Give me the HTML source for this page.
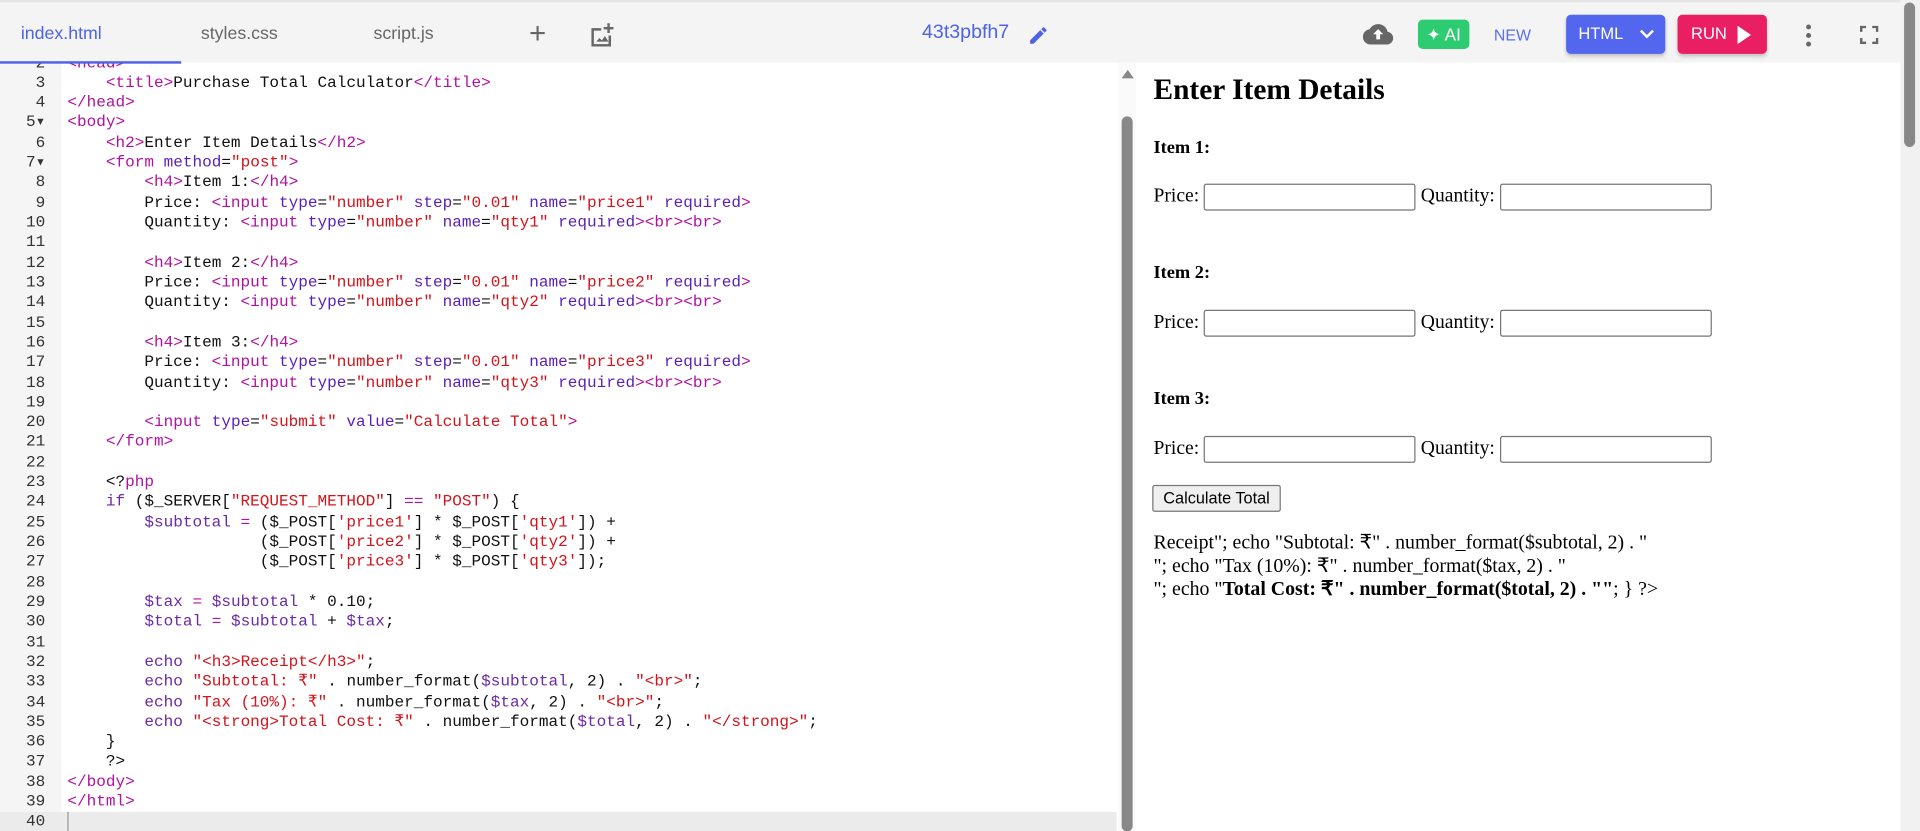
<!DOCTYPE html>
<html><head><meta charset="utf-8">
<style>
html,body{margin:0;padding:0;width:1920px;height:831px;overflow:hidden;background:#fff}
#w{position:absolute;left:0;top:0;width:1568px;height:679px;transform:scale(1.22449);transform-origin:0 0;font-family:"Liberation Sans",sans-serif}
#hdr{position:absolute;left:0;top:0;width:1552px;height:51px;background:#f4f4f4;border-top:2px solid #e6e6e6;box-sizing:border-box;z-index:5}
.tab{position:absolute;top:18px;font-size:14.5px;color:#666}
#ul{position:absolute;left:0;top:48px;width:148px;height:2px;background:#4d63e6}
#ed{position:absolute;left:0;top:51px;width:912px;height:628px;overflow:hidden;background:#fff}
#gut{position:absolute;left:0;top:0;width:50px;height:628px;background:#f5f5f5}
#code{position:absolute;left:0;top:-7.5px;width:912px;font-family:"Liberation Mono",monospace;font-size:13.1px;}
.l{height:16.32px;line-height:16.32px;position:relative;white-space:pre;color:#111}
.l .n{position:absolute;left:0;width:37px;text-align:right;color:#333}
.l .c{position:absolute;left:55px}
.t{color:#b0139f}.a{color:#5a1fb8}.s{color:#d4131b}.v{color:#6b2aa6}.k{color:#6b2aa6}.o{color:#b0139f}
#sb{position:absolute;left:913px;top:51px;width:15px;height:628px;background:#fafafa}
#pv{position:absolute;left:933px;top:51px;width:619px;height:628px;background:#fff;font-family:"Liberation Serif",serif;color:#000;font-size:16px}
#pv .x{position:absolute;white-space:nowrap}
.in{display:inline-block;width:171px;height:20px;border:1px solid #767676;border-radius:2px;vertical-align:middle}
#rsb{position:absolute;left:1552px;top:0;width:16px;height:679px;background:#f1f1f1}
</style></head><body><div id="w">
<div id="hdr">
<div class="tab" style="left:17px;color:#4d63e6">index.html</div>
<div class="tab" style="left:164px">styles.css</div>
<div class="tab" style="left:305px">script.js</div>
<div style="position:absolute;left:432px;top:12px;font-size:24px;color:#666;font-weight:300">+</div>
<svg style="position:absolute;left:480px;top:14px" width="24" height="24" viewBox="0 0 24 24"><path d="M18 3v3h3v2h-3v3h-2V8h-3V6h3V3z M4 7h7v2H5v11h12v-7h2v9H3V7z M7 18l2.5-3 2 2 2.5-3.5 3 4.5z" fill="#666"/></svg>
<div class="tab" style="left:753px;color:#4d63e6;font-size:16px;top:16px">43t3pbfh7</div>
<svg style="position:absolute;left:839px;top:18px" width="18" height="18" viewBox="0 0 24 24"><path d="M3 17.25V21h3.75L17.8 9.94l-3.75-3.75L3 17.25zM20.7 7.04a1 1 0 000-1.41l-2.34-2.34a1 1 0 00-1.41 0l-1.83 1.83 3.75 3.75 1.83-1.83z" fill="#4d63e6"/></svg>
<svg style="position:absolute;left:1113px;top:16px" width="25" height="20" viewBox="0 0 24 18"><path d="M19.35 7.04A7.49 7.49 0 0012 1C9.11 1 6.6 2.640 5.35 5.04A6 6 0 006 17h13a5 5 0 00.35-9.96z" fill="#666"/><path d="M12 5l4 4h-2.5v4h-3V9H8z" fill="#fff"/></svg>
<div style="position:absolute;left:1158px;top:14px;width:42px;height:24px;background:#2ecc71;border-radius:4px;color:#fff;font-size:14px;line-height:24px;text-align:center">✦ AI</div>
<div style="position:absolute;left:1220px;top:19px;color:#5a6fe6;font-size:13px">NEW</div>
<div style="position:absolute;left:1279px;top:10px;width:81px;height:32px;background:#5266ee;border-radius:4px;color:#fff;font-size:13.5px;line-height:32px;box-shadow:0 2px 3px rgba(0,0,0,.2)"><span style="margin-left:10px">HTML</span><svg style="position:absolute;left:60px;top:11px" width="12" height="10" viewBox="0 0 12 10"><path d="M1 2l5 5 5-5" stroke="#fff" stroke-width="2" fill="none"/></svg></div>
<div style="position:absolute;left:1370px;top:10px;width:73px;height:32px;background:#ea1f63;border-radius:4px;color:#fff;font-size:13.5px;line-height:32px;box-shadow:0 2px 3px rgba(0,0,0,.2)"><span style="margin-left:11px">RUN</span><svg style="position:absolute;left:48px;top:9px" width="12" height="15" viewBox="0 0 12 15"><path d="M1 0l11 7.5L1 15z" fill="#fff"/></svg></div>
<svg style="position:absolute;left:1474px;top:17px" width="6" height="20" viewBox="0 0 6 20"><circle cx="3" cy="3" r="2" fill="#666"/><circle cx="3" cy="10" r="2" fill="#666"/><circle cx="3" cy="17" r="2" fill="#666"/></svg>
<svg style="position:absolute;left:1519px;top:19px" width="15" height="15" viewBox="0 0 15 15"><path d="M1 5V1h4M10 1h4v4M14 10v4h-4M5 14H1v-4" stroke="#666" stroke-width="2" fill="none"/></svg>
<div id="ul"></div>
</div>
<div id="ed"><div id="gut"></div>
<div id="code">
<div class="l"><span class="n">2</span><span class="c"><span class="t">&lt;head&gt;</span></span></div>
<div class="l"><span class="n">3</span><span class="c">    <span class="t">&lt;title&gt;</span>Purchase Total Calculator<span class="t">&lt;/title&gt;</span></span></div>
<div class="l"><span class="n">4</span><span class="c"><span class="t">&lt;/head&gt;</span></span></div>
<div class="l"><span class="n">5▾</span><span class="c"><span class="t">&lt;body&gt;</span></span></div>
<div class="l"><span class="n">6</span><span class="c">    <span class="t">&lt;h2&gt;</span>Enter Item Details<span class="t">&lt;/h2&gt;</span></span></div>
<div class="l"><span class="n">7▾</span><span class="c">    <span class="t">&lt;form</span> <span class="a">method</span>=<span class="s">"post"</span><span class="t">&gt;</span></span></div>
<div class="l"><span class="n">8</span><span class="c">        <span class="t">&lt;h4&gt;</span>Item 1:<span class="t">&lt;/h4&gt;</span></span></div>
<div class="l"><span class="n">9</span><span class="c">        Price: <span class="t">&lt;input</span> <span class="a">type</span>=<span class="s">"number"</span> <span class="a">step</span>=<span class="s">"0.01"</span> <span class="a">name</span>=<span class="s">"price1"</span> <span class="a">required</span><span class="t">&gt;</span></span></div>
<div class="l"><span class="n">10</span><span class="c">        Quantity: <span class="t">&lt;input</span> <span class="a">type</span>=<span class="s">"number"</span> <span class="a">name</span>=<span class="s">"qty1"</span> <span class="a">required</span><span class="t">&gt;&lt;br&gt;&lt;br&gt;</span></span></div>
<div class="l"><span class="n">11</span><span class="c"></span></div>
<div class="l"><span class="n">12</span><span class="c">        <span class="t">&lt;h4&gt;</span>Item 2:<span class="t">&lt;/h4&gt;</span></span></div>
<div class="l"><span class="n">13</span><span class="c">        Price: <span class="t">&lt;input</span> <span class="a">type</span>=<span class="s">"number"</span> <span class="a">step</span>=<span class="s">"0.01"</span> <span class="a">name</span>=<span class="s">"price2"</span> <span class="a">required</span><span class="t">&gt;</span></span></div>
<div class="l"><span class="n">14</span><span class="c">        Quantity: <span class="t">&lt;input</span> <span class="a">type</span>=<span class="s">"number"</span> <span class="a">name</span>=<span class="s">"qty2"</span> <span class="a">required</span><span class="t">&gt;&lt;br&gt;&lt;br&gt;</span></span></div>
<div class="l"><span class="n">15</span><span class="c"></span></div>
<div class="l"><span class="n">16</span><span class="c">        <span class="t">&lt;h4&gt;</span>Item 3:<span class="t">&lt;/h4&gt;</span></span></div>
<div class="l"><span class="n">17</span><span class="c">        Price: <span class="t">&lt;input</span> <span class="a">type</span>=<span class="s">"number"</span> <span class="a">step</span>=<span class="s">"0.01"</span> <span class="a">name</span>=<span class="s">"price3"</span> <span class="a">required</span><span class="t">&gt;</span></span></div>
<div class="l"><span class="n">18</span><span class="c">        Quantity: <span class="t">&lt;input</span> <span class="a">type</span>=<span class="s">"number"</span> <span class="a">name</span>=<span class="s">"qty3"</span> <span class="a">required</span><span class="t">&gt;&lt;br&gt;&lt;br&gt;</span></span></div>
<div class="l"><span class="n">19</span><span class="c"></span></div>
<div class="l"><span class="n">20</span><span class="c">        <span class="t">&lt;input</span> <span class="a">type</span>=<span class="s">"submit"</span> <span class="a">value</span>=<span class="s">"Calculate Total"</span><span class="t">&gt;</span></span></div>
<div class="l"><span class="n">21</span><span class="c">    <span class="t">&lt;/form&gt;</span></span></div>
<div class="l"><span class="n">22</span><span class="c"></span></div>
<div class="l"><span class="n">23</span><span class="c">    &lt;?<span class="t">php</span></span></div>
<div class="l"><span class="n">24</span><span class="c">    <span class="k">if</span> ($_SERVER[<span class="s">"REQUEST_METHOD"</span>] <span class="o">==</span> <span class="s">"POST"</span>) {</span></div>
<div class="l"><span class="n">25</span><span class="c">        <span class="v">$subtotal</span> <span class="o">=</span> ($_POST[<span class="s">'price1'</span>] * $_POST[<span class="s">'qty1'</span>]) +</span></div>
<div class="l"><span class="n">26</span><span class="c">                    ($_POST[<span class="s">'price2'</span>] * $_POST[<span class="s">'qty2'</span>]) +</span></div>
<div class="l"><span class="n">27</span><span class="c">                    ($_POST[<span class="s">'price3'</span>] * $_POST[<span class="s">'qty3'</span>]);</span></div>
<div class="l"><span class="n">28</span><span class="c"></span></div>
<div class="l"><span class="n">29</span><span class="c">        <span class="v">$tax</span> <span class="o">=</span> <span class="v">$subtotal</span> * 0.10;</span></div>
<div class="l"><span class="n">30</span><span class="c">        <span class="v">$total</span> <span class="o">=</span> <span class="v">$subtotal</span> + <span class="v">$tax</span>;</span></div>
<div class="l"><span class="n">31</span><span class="c"></span></div>
<div class="l"><span class="n">32</span><span class="c">        <span class="k">echo</span> <span class="s">"&lt;h3&gt;Receipt&lt;/h3&gt;"</span>;</span></div>
<div class="l"><span class="n">33</span><span class="c">        <span class="k">echo</span> <span class="s">"Subtotal: ₹"</span> . number_format(<span class="v">$subtotal</span>, 2) . <span class="s">"&lt;br&gt;"</span>;</span></div>
<div class="l"><span class="n">34</span><span class="c">        <span class="k">echo</span> <span class="s">"Tax (10%): ₹"</span> . number_format(<span class="v">$tax</span>, 2) . <span class="s">"&lt;br&gt;"</span>;</span></div>
<div class="l"><span class="n">35</span><span class="c">        <span class="k">echo</span> <span class="s">"&lt;strong&gt;Total Cost: ₹"</span> . number_format(<span class="v">$total</span>, 2) . <span class="s">"&lt;/strong&gt;"</span>;</span></div>
<div class="l"><span class="n">36</span><span class="c">    }</span></div>
<div class="l"><span class="n">37</span><span class="c">    ?&gt;</span></div>
<div class="l"><span class="n">38</span><span class="c"><span class="t">&lt;/body&gt;</span></span></div>
<div class="l"><span class="n">39</span><span class="c"><span class="t">&lt;/html&gt;</span></span></div>
<div class="l" style="background:#ebebeb"><span class="n">40</span><span class="c" style="border-left:1px solid #999;height:16px"></span></div>
</div></div>
<div id="sb"><div style="position:absolute;left:3px;top:6px;width:0;height:0;border-left:5px solid transparent;border-right:5px solid transparent;border-bottom:7px solid #888"></div><div style="position:absolute;left:3px;top:44px;width:9px;height:584px;background:#888;border-radius:5px"></div></div>
<div id="pv">
<div class="x" style="left:9px;top:10px;font-size:24px;font-weight:bold">Enter Item Details</div>
<div class="x" style="left:9px;top:62px;font-weight:bold;font-size:15px">Item 1:</div>
<div class="x" style="left:9px;top:99px">Price: <span class="in"></span> Quantity: <span class="in"></span></div>
<div class="x" style="left:9px;top:164px;font-weight:bold;font-size:15px">Item 2:</div>
<div class="x" style="left:9px;top:202px">Price: <span class="in"></span> Quantity: <span class="in"></span></div>
<div class="x" style="left:9px;top:267px;font-weight:bold;font-size:15px">Item 3:</div>
<div class="x" style="left:9px;top:305px">Price: <span class="in"></span> Quantity: <span class="in"></span></div>
<div class="x" style="left:8px;top:345px;width:103px;height:20px;border:1px solid #767676;border-radius:2px;background:#efefef;font-family:'Liberation Sans',sans-serif;font-size:13.3px;line-height:20px;text-align:center">Calculate Total</div>
<div class="x" style="left:9px;top:383px;line-height:19px;font-size:16.2px">Receipt"; echo "Subtotal: ₹" . number_format($subtotal, 2) . "<br>"; echo "Tax (10%): ₹" . number_format($tax, 2) . "<br>"; echo "<b>Total Cost: ₹" . number_format($total, 2) . ""</b>; } ?&gt;</div>
</div>
<div id="rsb"><div style="position:absolute;left:3px;top:2px;width:9px;height:118px;background:#888;border-radius:5px"></div></div>
</div></body></html>
